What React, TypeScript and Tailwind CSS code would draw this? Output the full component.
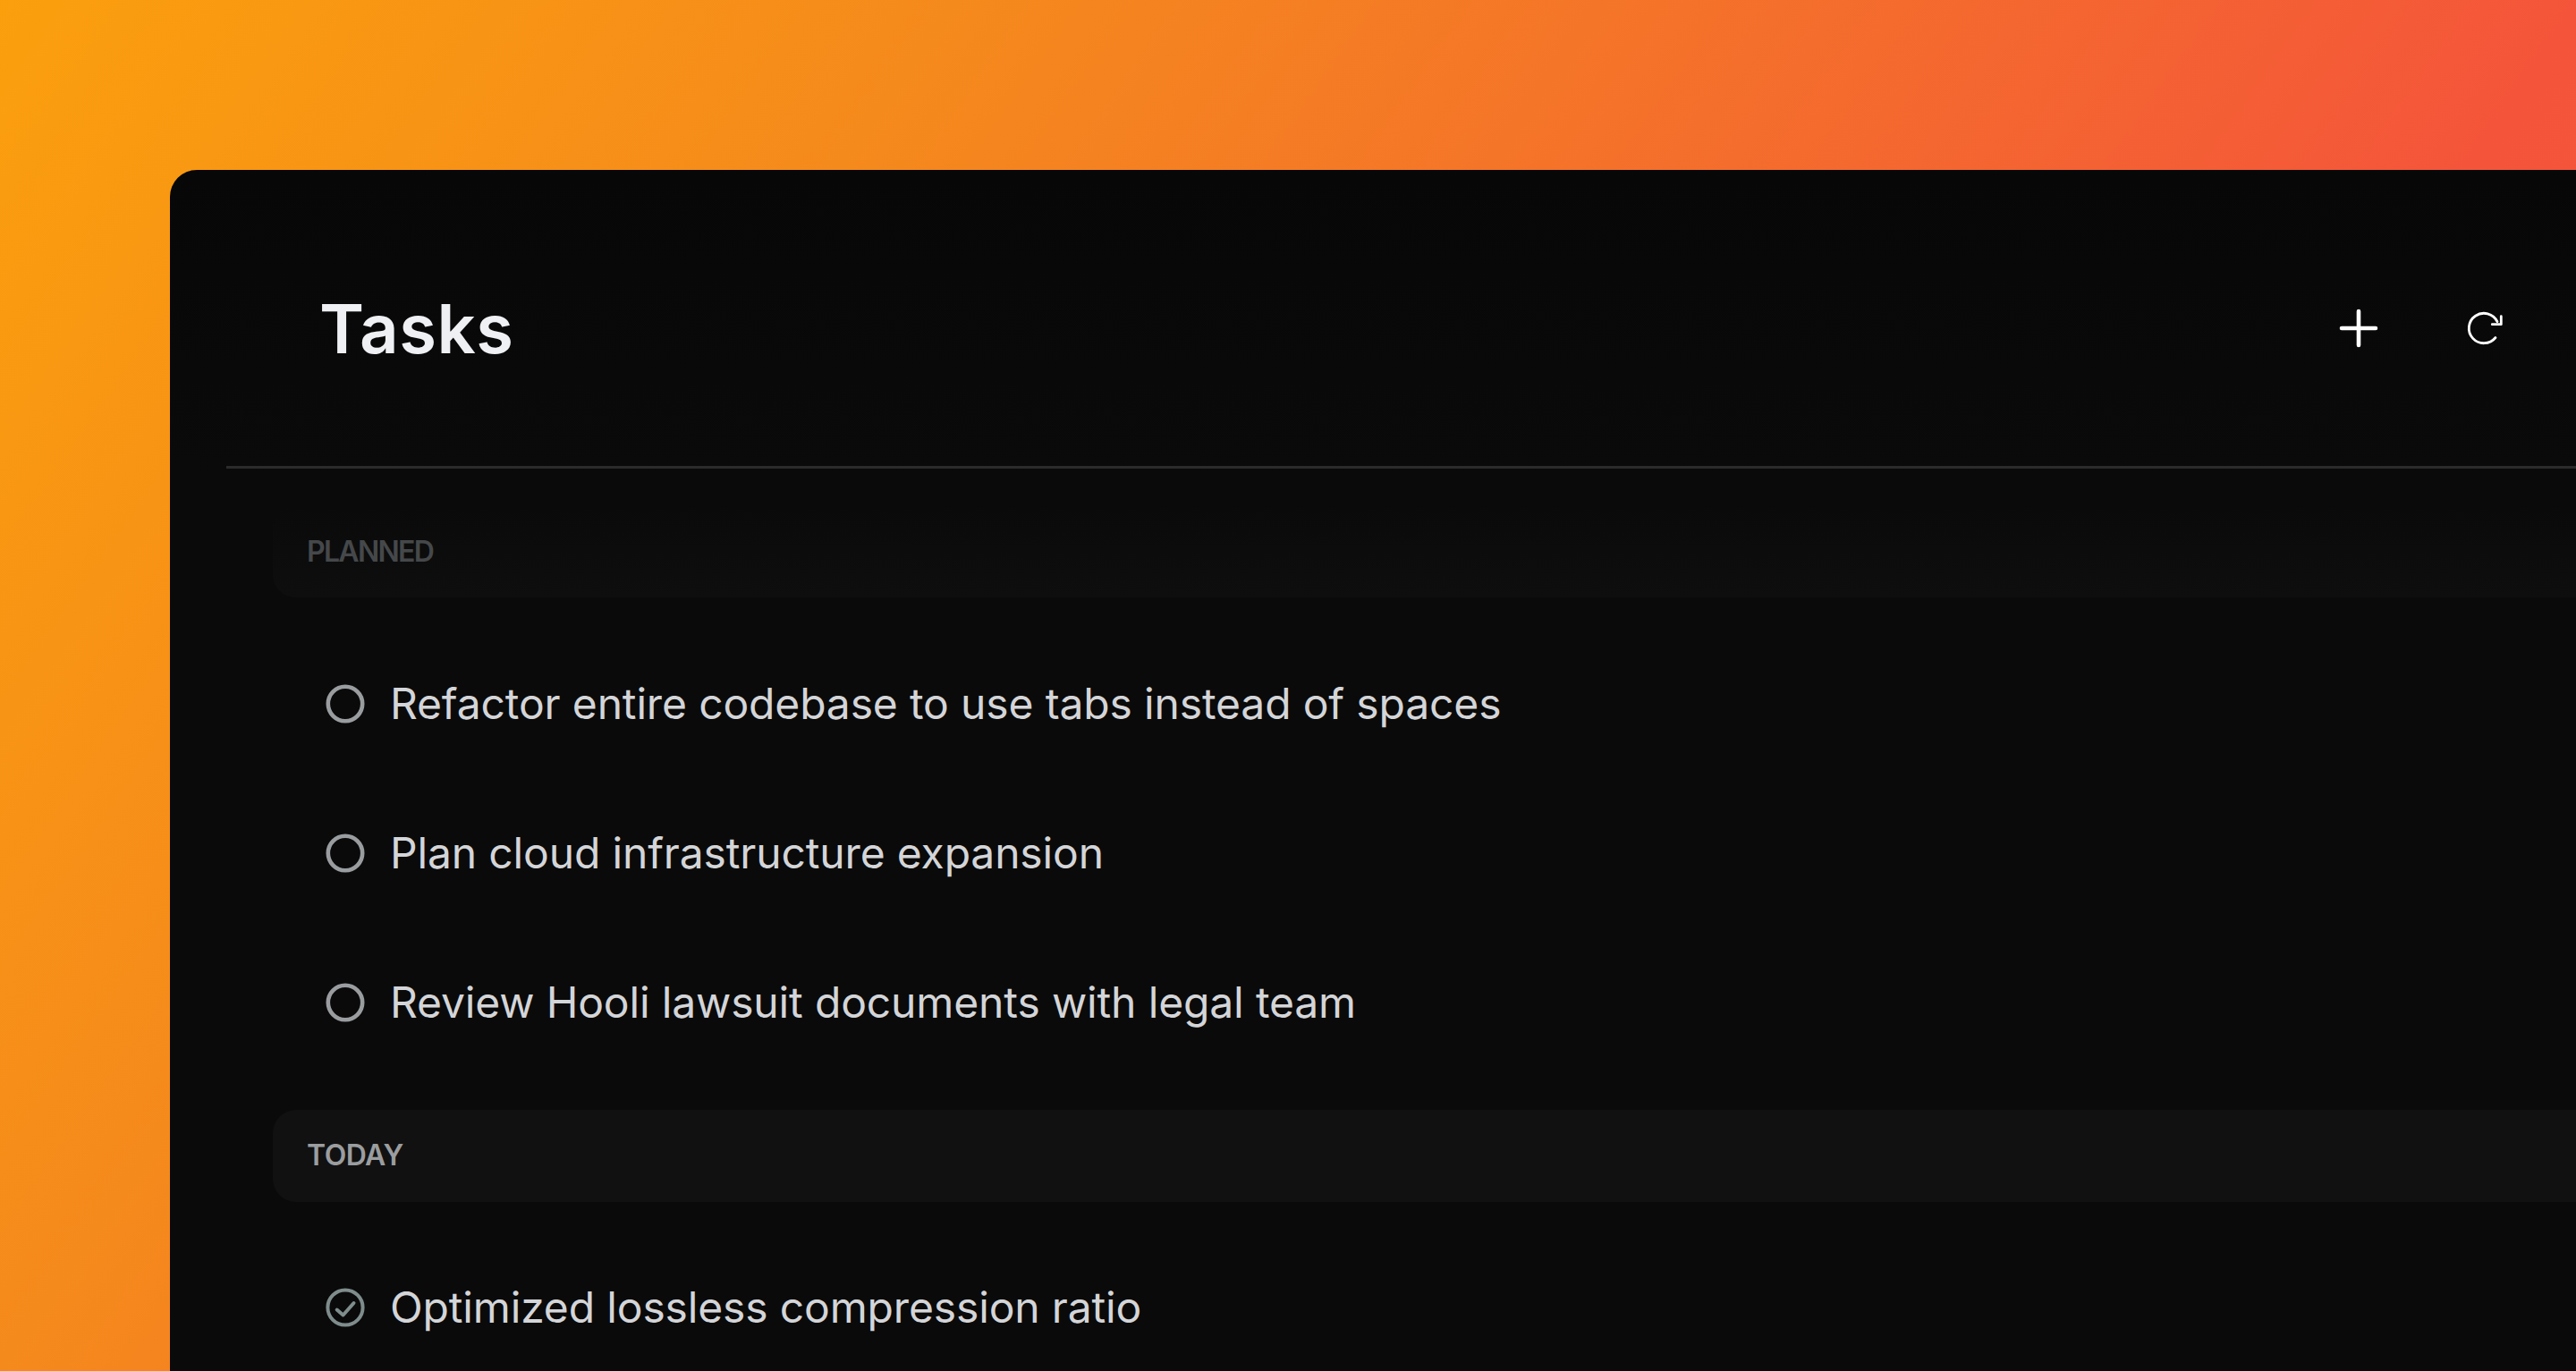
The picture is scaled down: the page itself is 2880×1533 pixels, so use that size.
const font = { fontFamily: '"Inter", "Noto Sans", sans-serif' };

function CircleIcon() {
  return (
    <svg width="44" height="44" viewBox="0 0 44 44" fill="none" className="shrink-0">
      <circle cx="22" cy="22" r="19.2" stroke="#9a9d9f" strokeWidth="4.6" />
    </svg>
  );
}

function CheckIcon() {
  return (
    <svg width="44" height="44" viewBox="0 0 44 44" fill="none" className="shrink-0">
      <circle cx="22" cy="22" r="19.6" stroke="#7f8c8c" strokeWidth="4" />
      <path d="M12.7 24.6L19.6 30.5L31.5 17" stroke="#7f8c8c" strokeWidth="4" strokeLinecap="round" strokeLinejoin="round" />
    </svg>
  );
}

function Task({ text, done }: { text: string; done?: boolean }) {
  return (
    <div className="flex h-[167px] items-center gap-[28px] pl-[59px]">
      {done ? <CheckIcon /> : <CircleIcon />}
      <span className="text-[48px] font-[380] tracking-[-0.15px] text-[#d4d5d8] whitespace-nowrap">{text}</span>
    </div>
  );
}

export default function App() {
  return (
    <div className="h-[1533px] w-[2880px] overflow-hidden bg-[linear-gradient(125deg,#fb9f0d,#f58a1c_27%,#f4553a_73%,#f24e3e)] pl-[190px] pt-[190px]" style={font}>
      <div className="h-[1343px] w-full rounded-tl-[30px] bg-[linear-gradient(to_bottom,#070707,#0a0a0a_25%)] pl-[63px]">
        <header className="flex h-[334px] items-center justify-between border-b-[3px] border-[#2b2b2b] pl-[104px] pr-[79px] pt-[22px]">
          <h1 className="text-[76px] font-semibold leading-none tracking-[0.5px] text-[#eef0f3]">Tasks</h1>
          <div className="flex items-center gap-[94px]">
            <svg width="44" height="44" viewBox="0 0 44 44" fill="none" stroke="#fff" strokeWidth="4.6" strokeLinecap="round"><path d="M22 3v38M3 22h38" /></svg>
            <svg width="48" height="48" viewBox="0 0 48 48" fill="none" stroke="#fff" strokeWidth="2.8" strokeLinecap="round" strokeLinejoin="round"><path d="M39 16.7A16.7 16.7 0 1 0 37 34.5" /><path d="M33.3 19.7H43.3V10.7" /></svg>
          </div>
        </header>
        <div className="pl-[52px]">
          <div className="mt-[41px] flex h-[103px] items-center rounded-l-[26px] bg-[linear-gradient(to_bottom,#0a0a0a,#0e0e0e)] pl-[38px] text-[32px] font-semibold tracking-[-1.7px] text-[#45484a]">PLANNED</div>
          <div className="mt-[35px]" />
          <Task text="Refactor entire codebase to use tabs instead of spaces" />
          <Task text="Plan cloud infrastructure expansion" />
          <Task text="Review Hooli lawsuit documents with legal team" />
          <div className="mt-[37px] flex h-[103px] items-center rounded-l-[26px] bg-[#111111] pb-[1px] pl-[38px] text-[32px] font-semibold tracking-[-0.5px] text-[#9b9d9f]">TODAY</div>
          <div className="mt-[34px]" />
          <Task text="Optimized lossless compression ratio" done />
        </div>
      </div>
    </div>
  );
}
